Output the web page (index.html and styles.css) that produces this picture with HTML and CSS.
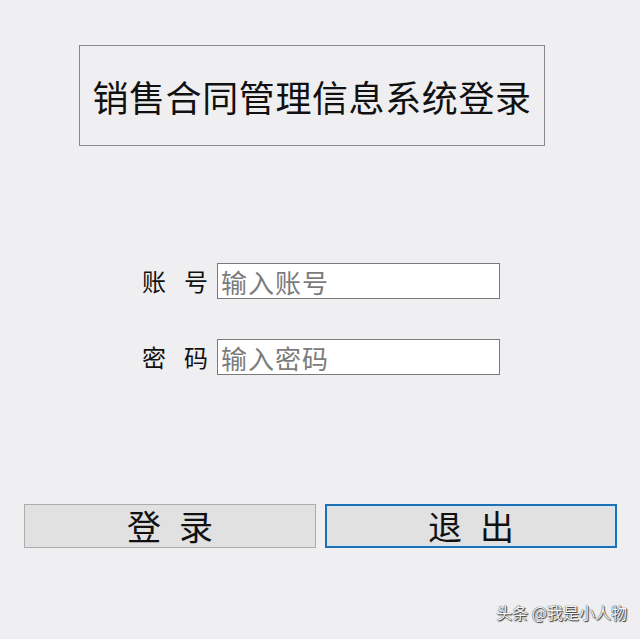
FILE: index.html
```html
<!DOCTYPE html>
<html lang="zh-CN">
<head>
  <meta charset="UTF-8" />
  <meta name="viewport" content="width=device-width, initial-scale=1.0" />
  <title>销售合同管理信息系统登录</title>
  <link rel="stylesheet" href="styles.css">
</head>
<body>
  <div class="title-box">
    <h1>销售合同管理信息系统登录</h1>
  </div>

  <form class="login-form" onsubmit="return false">
    <div class="row">
      <label class="label" for="account"><span>账</span><span>号</span></label>
      <input id="account" type="text" placeholder="输入账号">
    </div>
    <div class="row">
      <label class="label" for="password"><span>密</span><span>码</span></label>
      <input id="password" type="password" placeholder="输入密码">
    </div>

    <div class="buttons">
      <button type="submit" class="btn"><span>登</span><span>录</span></button>
      <button type="button" class="btn btn-focus"><span>退</span><span>出</span></button>
    </div>
  </form>

  <div class="watermark">头条 @我是小人物</div>
</body>
</html>
```

FILE: styles.css
```css
* {
  margin: 0; padding: 0; box-sizing: border-box;
  font-family: "Noto Sans CJK SC", "DejaVu Sans", sans-serif;
}
html, body { height: 100%; }
body {
  background: #efeff1;
  color: #111;
  position: relative;
  overflow: hidden;
}

.title-box {
  margin: 45px 0 0 79px;
  width: 466px;
  height: 101px;
  border: 1px solid #8a8a8a;
  display: flex;
  align-items: center;
  justify-content: center;
}
.title-box h1 {
  font-size: 36px;
  font-weight: 400;
  letter-spacing: 0.6px;
  line-height: 1;
}

.login-form { margin-top: 117px; }
.row {
  display: flex;
  align-items: center;
  padding-left: 142px;
  margin-bottom: 40px;
}
.label {
  display: flex;
  justify-content: space-between;
  width: 66px;
  margin-right: 9px;
  font-size: 24px;
  line-height: 1;
}
.row input {
  width: 283px;
  height: 36px;
  border: 1px solid #7a7a7a;
  background: #fff;
  padding: 0 3px;
  font-size: 26px;
  letter-spacing: 1px;
  color: #222;
  outline: none;
}
.row input::placeholder { color: #7c7c7c; }

.buttons {
  display: flex;
  gap: 9px;
  padding-left: 24px;
  margin-top: 129px;
}
.btn {
  width: 292px;
  height: 44px;
  background: #e1e1e1;
  border: 1px solid #adadad;
  display: flex;
  justify-content: center;
  align-items: center;
  gap: 18px;
  font-size: 34px;
  line-height: 1;
  color: #111;
  cursor: pointer;
}
.btn-focus {
  border: 2px solid #1f6fb5;
  box-shadow: inset 0 0 0 1px #cfe6f7;
}

.watermark {
  position: absolute;
  right: 13px;
  bottom: 15px;
  font-size: 16px;
  color: #f6f6f6;
  text-shadow: 1px 1px 1px #333, 0 0 1px #000;
}
```
